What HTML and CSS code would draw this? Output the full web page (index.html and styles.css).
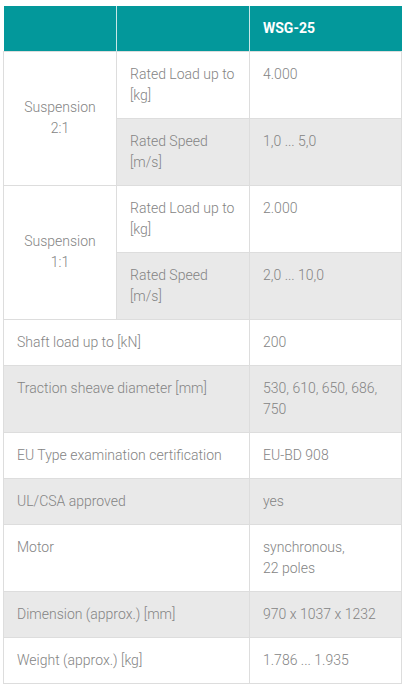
FILE: index.html
```html
<!DOCTYPE html>
<html lang="en">
<head>
    <meta charset="UTF-8">
    <meta name="viewport" content="width=device-width, initial-scale=1.0">
    <title>WSG-25</title>
    <link rel="stylesheet" href="styles.css">
</head>
<body>

    <table class="specs">
        <colgroup>
            <col class="col-a">
            <col class="col-b">
            <col class="col-c">
        </colgroup>
        <thead>
            <tr>
                <th></th>
                <th></th>
                <th>WSG-25</th>
            </tr>
        </thead>
        <tbody>
            <tr>
                <td rowspan="2" class="group">Suspension<br>2:1</td>
                <td>Rated Load up to [kg]</td>
                <td>4.000</td>
            </tr>
            <tr class="alt">
                <td>Rated Speed [m/s]</td>
                <td>1,0 ... 5,0</td>
            </tr>
            <tr>
                <td rowspan="2" class="group">Suspension<br>1:1</td>
                <td>Rated Load up to [kg]</td>
                <td>2.000</td>
            </tr>
            <tr class="alt">
                <td>Rated Speed [m/s]</td>
                <td>2,0 ... 10,0</td>
            </tr>
            <tr>
                <td colspan="2">Shaft load up to [kN]</td>
                <td>200</td>
            </tr>
            <tr class="alt">
                <td colspan="2">Traction sheave diameter [mm]</td>
                <td>530, 610, 650, 686, 750</td>
            </tr>
            <tr>
                <td colspan="2">EU Type examination certification</td>
                <td>EU-BD 908</td>
            </tr>
            <tr class="alt">
                <td colspan="2">UL/CSA approved</td>
                <td>yes</td>
            </tr>
            <tr>
                <td colspan="2">Motor</td>
                <td>synchronous,<br>22 poles</td>
            </tr>
            <tr class="alt">
                <td colspan="2">Dimension (approx.) [mm]</td>
                <td>970 x 1037 x 1232</td>
            </tr>
            <tr>
                <td colspan="2">Weight (approx.) [kg]</td>
                <td>1.786 ... 1.935</td>
            </tr>
        </tbody>
    </table>

</body>
</html>
```

FILE: styles.css
```css
* {
    margin: 0;
    padding: 0;
    box-sizing: border-box;
}

body {
    font-family: 'Roboto', 'Liberation Sans', sans-serif;
    background-color: #fff;
    padding: 6px 2px 0 3px;
}

.specs {
    width: 399px;
    border-collapse: collapse;
    table-layout: fixed;
    font-size: 14px;
    line-height: 21px;
    font-weight: 300;
    color: #848484;
}

.col-a {
    width: 113px;
}

.col-b {
    width: 133px;
}

.specs th {
    background-color: #03989b;
    color: #fff;
    font-weight: 700;
    text-align: left;
    height: 45px;
    padding: 0 13px;
    border-left: 1px solid #c8e6e7;
}

.specs th:first-child {
    border-left: none;
}

.specs td {
    padding: 12px 13px;
    border: 1px solid #ddd;
    vertical-align: top;
    background-color: #fff;
}

.specs tr.alt td {
    background-color: #e9e9e9;
}

.specs td.group {
    text-align: center;
    vertical-align: middle;
    background-color: #fff;
}
```
